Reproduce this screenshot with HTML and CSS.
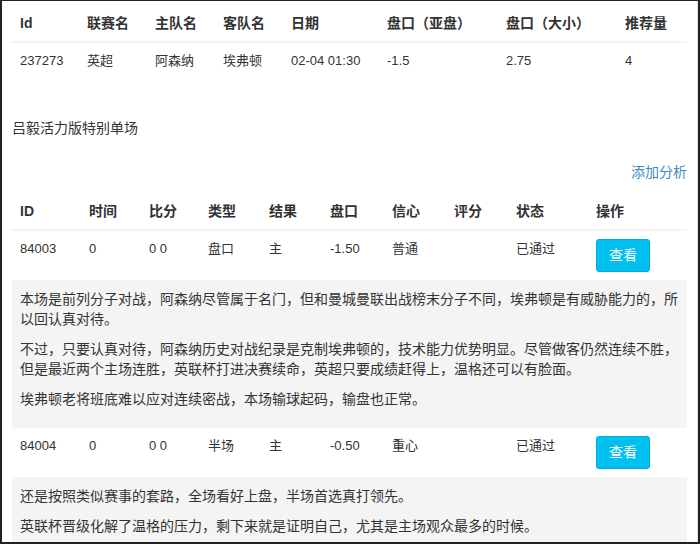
FILE: index.html
```html
<!DOCTYPE html>
<html lang="zh-CN">

<head>
    <meta charset="UTF-8">
    <meta name="viewport" content="width=device-width, initial-scale=1.0">
    <title>单场推荐</title>
    <link rel="stylesheet" href="styles.css">
</head>

<body>
    <div class="page">
        <!-- Match info -->
        <table class="table match-table">
            <thead>
                <tr>
                    <th class="c-id">Id</th>
                    <th class="c-league">联赛名</th>
                    <th class="c-home">主队名</th>
                    <th class="c-away">客队名</th>
                    <th class="c-date">日期</th>
                    <th class="c-asia">盘口（亚盘）</th>
                    <th class="c-size">盘口（大小）</th>
                    <th>推荐量</th>
                </tr>
            </thead>
            <tbody>
                <tr>
                    <td>237273</td>
                    <td>英超</td>
                    <td>阿森纳</td>
                    <td>埃弗顿</td>
                    <td>02-04 01:30</td>
                    <td>-1.5</td>
                    <td>2.75</td>
                    <td>4</td>
                </tr>
            </tbody>
        </table>

        <div class="section-title">吕毅活力版特别单场</div>

        <div class="toolbar">
            <a href="#" class="add-link">添加分析</a>
        </div>

        <!-- Analysis list -->
        <table class="table analysis-table">
            <thead>
                <tr>
                    <th class="a-id">ID</th>
                    <th class="a-time">时间</th>
                    <th class="a-score">比分</th>
                    <th class="a-type">类型</th>
                    <th class="a-result">结果</th>
                    <th class="a-line">盘口</th>
                    <th class="a-conf">信心</th>
                    <th class="a-rate">评分</th>
                    <th class="a-state">状态</th>
                    <th>操作</th>
                </tr>
            </thead>
            <tbody>
                <tr>
                    <td>84003</td>
                    <td>0</td>
                    <td>0 0</td>
                    <td>盘口</td>
                    <td>主</td>
                    <td>-1.50</td>
                    <td>普通</td>
                    <td></td>
                    <td>已通过</td>
                    <td><button class="btn-view">查看</button></td>
                </tr>
                <tr class="detail-row">
                    <td colspan="10">
                        <p>本场是前列分子对战，阿森纳尽管属于名门，但和曼城曼联出战榜末分子不同，埃弗顿是有威胁能力的，所以回认真对待。</p>
                        <p>不过，只要认真对待，阿森纳历史对战纪录是克制埃弗顿的，技术能力优势明显。尽管做客仍然连续不胜，但是最近两个主场连胜，英联杯打进决赛续命，英超只要成绩赶得上，温格还可以有脸面。</p>
                        <p>埃弗顿老将班底难以应对连续密战，本场输球起码，输盘也正常。</p>
                    </td>
                </tr>
                <tr>
                    <td>84004</td>
                    <td>0</td>
                    <td>0 0</td>
                    <td>半场</td>
                    <td>主</td>
                    <td>-0.50</td>
                    <td>重心</td>
                    <td></td>
                    <td>已通过</td>
                    <td><button class="btn-view">查看</button></td>
                </tr>
                <tr class="detail-row">
                    <td colspan="10">
                        <p>还是按照类似赛事的套路，全场看好上盘，半场首选真打领先。</p>
                        <p>英联杯晋级化解了温格的压力，剩下来就是证明自己，尤其是主场观众最多的时候。</p>
                    </td>
                </tr>
            </tbody>
        </table>
    </div>
</body>

</html>
```

FILE: styles.css
```css
html,
body {
    margin: 0;
    padding: 0;
    height: 100%;
    overflow: hidden;
}

body {
    font-family: "Helvetica Neue", "Liberation Sans", "Noto Sans CJK SC", sans-serif;
    font-size: 14px;
    line-height: 20px;
    color: #333;
    background-color: #fff;
}

.page {
    box-sizing: border-box;
    height: 544px;
    padding: 4px 11px 0 10px;
    border-top: 1px solid #222;
    border-left: 2px solid #222;
    border-right: 2px solid #222;
    border-bottom: 2px solid #222;
    box-shadow: inset -1px 0 0 #e6e6e6;
    overflow: hidden;
}

.table {
    width: 100%;
    border-collapse: collapse;
    table-layout: fixed;
    margin-bottom: 20px;
}

.table th {
    text-align: left;
    font-weight: bold;
    font-size: 14px;
    padding: 8px;
    vertical-align: bottom;
    border-bottom: 2px solid #f4f4f4;
}

.table td {
    font-size: 13px;
    padding: 8px;
    vertical-align: top;
    border-top: 1px solid #f4f4f4;
}

/* match table columns */
.c-id { width: 51px; }
.c-league,
.c-home,
.c-away { width: 52px; }
.c-date { width: 80px; }
.c-asia,
.c-size { width: 103px; }

/* analysis table columns */
.a-id { width: 53px; }
.a-time { width: 44px; }
.a-score { width: 43px; }
.a-type,
.a-result { width: 45px; }
.a-line,
.a-conf,
.a-rate { width: 46px; }
.a-state { width: 64px; }

.section-title {
    margin-top: 39px;
    font-size: 14px;
}

.toolbar {
    margin-top: 24px;
    margin-bottom: 11px;
    text-align: right;
}

.add-link {
    color: #3c8dbc;
    text-decoration: none;
}

.btn-view {
    font-family: inherit;
    font-size: 14px;
    line-height: 19px;
    color: #fff;
    background-color: #00c0ef;
    border: 1px solid #00acd6;
    border-radius: 3px;
    padding: 6px 12px;
    cursor: pointer;
}

.detail-row td {
    background-color: #f4f4f4;
    font-size: 14px;
    padding-right: 4px;
}

.detail-row p {
    margin: 0 0 10px;
}
```
